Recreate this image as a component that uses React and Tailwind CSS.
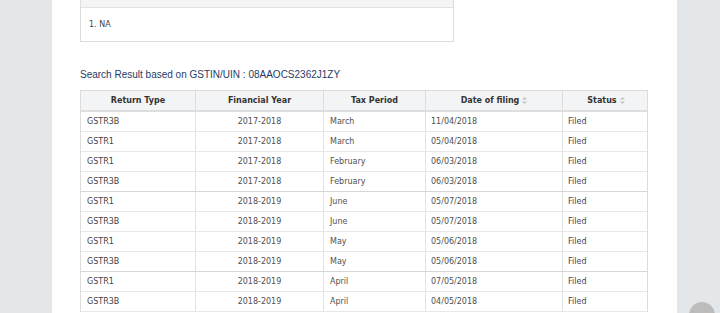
import React from 'react'

const rows = [
  ['GSTR3B', '2017-2018', 'March', '11/04/2018', 'Filed'],
  ['GSTR1', '2017-2018', 'March', '05/04/2018', 'Filed'],
  ['GSTR1', '2017-2018', 'February', '06/03/2018', 'Filed'],
  ['GSTR3B', '2017-2018', 'February', '06/03/2018', 'Filed'],
  ['GSTR1', '2018-2019', 'June', '05/07/2018', 'Filed'],
  ['GSTR3B', '2018-2019', 'June', '05/07/2018', 'Filed'],
  ['GSTR1', '2018-2019', 'May', '05/06/2018', 'Filed'],
  ['GSTR3B', '2018-2019', 'May', '05/06/2018', 'Filed'],
  ['GSTR1', '2018-2019', 'April', '07/05/2018', 'Filed'],
  ['GSTR3B', '2018-2019', 'April', '04/05/2018', 'Filed'],
]

const cols = 'grid grid-cols-[115px_128px_102px_137px_86px]'

const SortIcon = () => (
  <svg width="5" height="7" viewBox="0 0 5 7" className="ml-[3px] inline-block">
    <path d="M2.5 0 L5 2.6 L0 2.6 Z" fill="#c4c4c4" />
    <path d="M2.5 7 L5 4.4 L0 4.4 Z" fill="#c4c4c4" />
  </svg>
)

const App = () => {
  return (
    <div className="relative flex h-[313px] w-[720px] overflow-hidden bg-[#e4e7ea] font-['DejaVu_Sans',sans-serif]">
      <div className="w-[52px]" />
      <div className="w-[625px] bg-white pl-[28px]">
        {/* previous section box */}
        <div className="w-[374px] border-x border-b border-[#dcdcdc]">
          <div className="h-[8px] border-b border-[#e2e2e2] bg-[#f5f5f5]" />
          <ol className="flex h-[33px] items-center pl-[8px] text-[8px] text-[#444]">
            <li>1. NA</li>
          </ol>
        </div>

        <p className="mt-[26px] font-['Liberation_Sans',Arial,sans-serif] text-[10px] leading-[14px] text-[#1f3b66]">
          Search Result based on GSTIN/UIN : 08AAOCS2362J1ZY
        </p>

        <div className="mt-[8px] w-[568px] border-x border-t border-[#dcdcdc] text-[8px]">
          <div className={`${cols} h-[21px] border-b-2 border-[#dedede] bg-[#f3f4f5] font-bold text-[#333]`}>
            <div className="flex items-center justify-center border-r border-[#dcdcdc]">Return Type</div>
            <div className="flex items-center justify-center border-r border-[#dcdcdc]">Financial Year</div>
            <div className="flex items-center justify-center border-r border-[#dcdcdc]">Tax Period</div>
            <div className="flex items-center justify-center border-r border-[#dcdcdc]">
              Date of filing<SortIcon />
            </div>
            <div className="flex items-center justify-center">
              Status<SortIcon />
            </div>
          </div>
          {rows.map((r, i) => (
            <div
              key={i}
              className={`${cols} h-[20px] border-b text-[#505050] ${
                i === 3 || i === 7 ? 'border-[#d6d6d6]' : 'border-[#e8e8e8]'
              }`}
            >
              <div className="flex items-center border-r border-[#e3e3e3] pl-[6px] text-[#444]">{r[0]}</div>
              <div className="flex items-center justify-center border-r border-[#e3e3e3]">{r[1]}</div>
              <div className="flex items-center border-r border-[#e3e3e3] pl-[6px]">{r[2]}</div>
              <div className="flex items-center border-r border-[#e3e3e3] pl-[5px]">{r[3]}</div>
              <div className="flex items-center pl-[5px] text-[#3b3f5c]">{r[4]}</div>
            </div>
          ))}
        </div>
      </div>
      <div className="flex-1" />

      {/* scroll to top button */}
      <div className="absolute left-[689px] top-[302px] h-[26px] w-[26px] rounded-full bg-[#bcbcbc]" />
    </div>
  )
}

export default App
